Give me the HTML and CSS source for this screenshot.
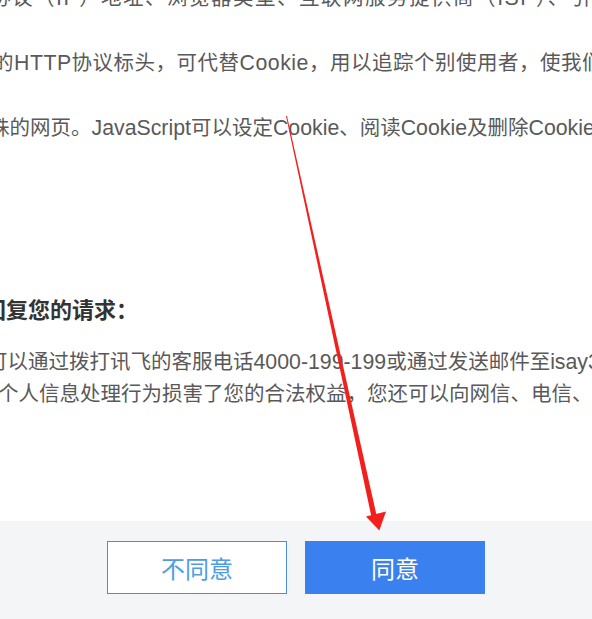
FILE: index.html
```html
<!DOCTYPE html>
<html lang="zh-CN">
<head>
<meta charset="utf-8">
<title>隐私政策</title>
<link rel="stylesheet" href="styles.css">
</head>
<body>
<div class="dialog">
  <div class="content">
    <p class="para p1">协议（<span class="en">IP</span>）地址、浏览器类型、互联网服务提供商（<span class="en">ISP</span>）、引用页面</p>
    <p class="para p2">的<span class="en">HTTP</span>协议标头，可代替<span class="en">Cookie</span>，用以追踪个别使用者，使我们了解</p>
    <p class="para p3">殊的网页。<span class="en">JavaScript</span>可以设定<span class="en">Cookie</span>、阅读<span class="en">Cookie</span>及删除<span class="en">Cookie</span>。</p>
    <h3 class="heading">回复您的请求：</h3>
    <p class="body b1">可以通过拨打讯飞的客服电话<span class="en">4000-199-199</span>或通过发送邮件至<span class="en">isay365@iflytek.com</span></p>
    <p class="body b2">个人信息处理行为损害了您的合法权益，您还可以向网信、电信、公安</p>
  </div>
  <div class="footer">
    <button class="btn btn-cancel">不同意</button>
    <button class="btn btn-ok">同意</button>
  </div>
</div>
<svg class="arrow" width="592" height="619" viewBox="0 0 592 619" xmlns="http://www.w3.org/2000/svg">
  <polygon points="286,116.1 287,115.9 376.6,515.4 371.4,516.6" fill="#f2201d"/>
  <polygon points="366,516.5 386,511.5 379.3,530.5" fill="#f2201d"/>
</svg>
</body>
</html>
```
FILE: styles.css
```css
html, body {
  margin: 0;
  padding: 0;
  background: #ffffff;
}
body {
  width: 592px;
  height: 619px;
  overflow: hidden;
  position: relative;
  font-family: "Liberation Sans", "Noto Sans CJK SC", sans-serif;
}
.dialog {
  display: flex;
  flex-direction: column;
  height: 619px;
}
.content {
  height: 521px;
  overflow: hidden;
  color: #595959;
  font-size: 20.5px;
}
.en {
  font-size: 21.3px;
}
.para, .body, .heading {
  margin: 0;
  white-space: nowrap;
  line-height: 32px;
}
.para {
  margin-bottom: 33px;
}
.p1 { margin-top: -18px; margin-left: -10px; letter-spacing: 1.5px; }
.p2 { margin-left: -7px; letter-spacing: 0.5px; }
.p3 { margin-left: -11px; margin-bottom: 0; }
.heading {
  margin-top: 151px;
  margin-left: -16px;
  font-size: 22px;
  font-weight: bold;
  color: #333333;
}
.b1 { margin-top: 19px; margin-left: -13px; }
.b2 { margin-left: -2px; }
.footer {
  flex: 1;
  background: #f4f5f7;
  display: flex;
  justify-content: center;
  align-items: flex-start;
  gap: 18px;
  padding-top: 20px;
}
.btn {
  width: 180px;
  height: 53px;
  font-family: "Noto Sans CJK SC", sans-serif;
  font-size: 24px;
  cursor: pointer;
  padding: 0;
}
.btn-cancel {
  background: #ffffff;
  border: 1px solid #4a8de0;
  color: #4f9ce6;
}
.btn-ok {
  background: #3a80ef;
  border: 1px solid #3a80ef;
  color: #ffffff;
}
.arrow {
  position: absolute;
  left: 0;
  top: 0;
  pointer-events: none;
}
```
